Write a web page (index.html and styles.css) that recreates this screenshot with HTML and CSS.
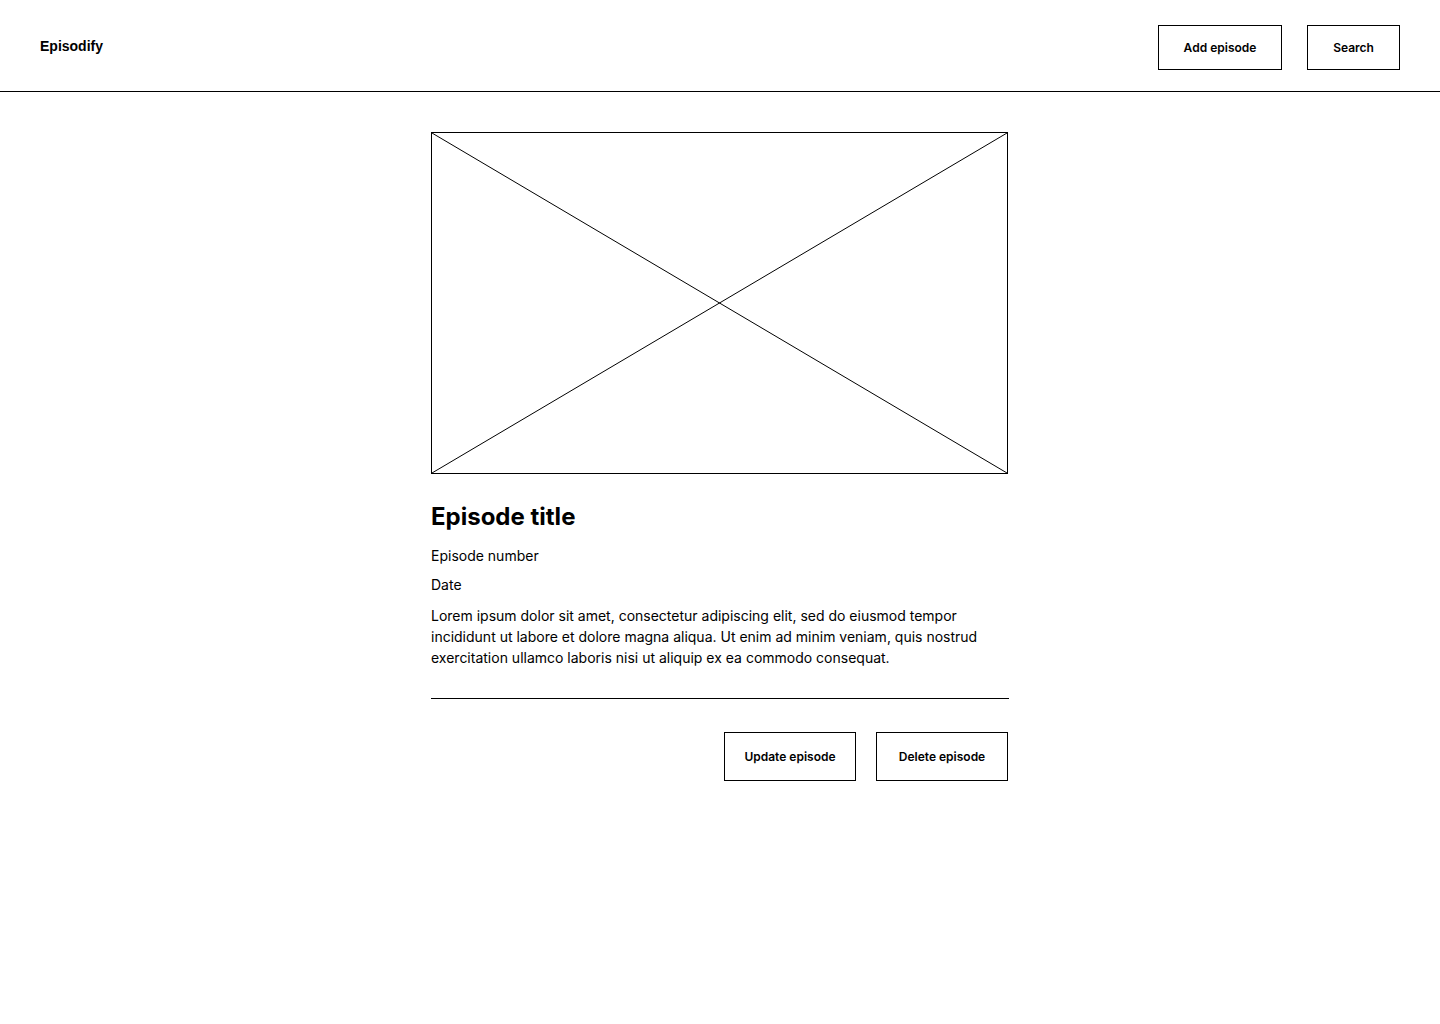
FILE: index.html
```html
<!DOCTYPE html>
<html lang="en">
<head>
<meta charset="utf-8">
<title>Episodify</title>
<link rel="stylesheet" href="styles.css">
</head>
<body>
<header class="header">
  <div class="logo">Episodify</div>
  <nav class="nav">
    <button class="btn btn-nav btn-add">Add episode</button>
    <button class="btn btn-nav btn-search">Search</button>
  </nav>
</header>
<main class="main">
  <article class="episode">
    <div class="placeholder">
      <svg class="placeholder-x" viewBox="0 0 575 340" preserveAspectRatio="none">
        <line x1="0" y1="0" x2="575" y2="340" stroke="#000" stroke-width="1"/>
        <line x1="575" y1="0" x2="0" y2="340" stroke="#000" stroke-width="1"/>
      </svg>
    </div>
    <h1 class="title">Episode title</h1>
    <p class="meta meta-number">Episode number</p>
    <p class="meta meta-date">Date</p>
    <p class="desc">Lorem ipsum dolor sit amet, consectetur adipiscing elit, sed do eiusmod tempor incididunt ut labore et dolore magna aliqua. Ut enim ad minim veniam, quis nostrud exercitation ullamco laboris nisi ut aliquip ex ea commodo consequat.</p>
    <hr class="divider">
    <div class="actions">
      <button class="btn btn-action">Update episode</button>
      <button class="btn btn-action">Delete episode</button>
    </div>
  </article>
</main>
</body>
</html>
```
FILE: styles.css
```css
* { box-sizing: border-box; }
html, body { margin: 0; padding: 0; background: #fff; color: #000; }
body { font-family: Inter, "Noto Sans", sans-serif; }

.header {
  height: 92px;
  display: flex;
  align-items: center;
  justify-content: space-between;
  padding: 4px 40px 0;
  border-bottom: 1px solid #000;
}
.logo {
  font-family: "Liberation Sans", Arial, sans-serif;
  font-weight: 700;
  font-size: 14px;
  margin-top: -4px;
}
.nav { display: flex; gap: 25px; }

.btn {
  font-family: Inter, sans-serif;
  font-weight: 600;
  font-size: 12px;
  line-height: 15px;
  color: #000;
  background: #fff;
  border: 1px solid #000;
  border-radius: 0;
  padding: 0;
  cursor: pointer;
}
.btn-nav { height: 45px; }
.btn-add { width: 124px; }
.btn-search { width: 93px; }

.main { display: flex; justify-content: center; padding: 40px 1px 0 0; }
.episode { width: 577px; }

.placeholder {
  width: 577px;
  height: 342px;
  border: 1px solid #000;
}
.placeholder-x { display: block; width: 100%; height: 100%; }

.title {
  margin: 28px 0 0;
  font-size: 24px;
  font-weight: 700;
  line-height: 29px;
}
.meta { margin: 0; font-size: 14px; line-height: 17px; }
.meta-number { margin-top: 16px; }
.meta-date { margin-top: 12px; }
.desc { margin: 12px 0 0; font-size: 14px; line-height: 21px; }

.divider {
  margin: 30px 0 0;
  width: 578px;
  border: 0;
  border-top: 1px solid #000;
  height: 0;
}
.actions {
  display: flex;
  justify-content: flex-end;
  gap: 20px;
  margin-top: 33px;
}
.btn-action { width: 132px; height: 49px; }
```
